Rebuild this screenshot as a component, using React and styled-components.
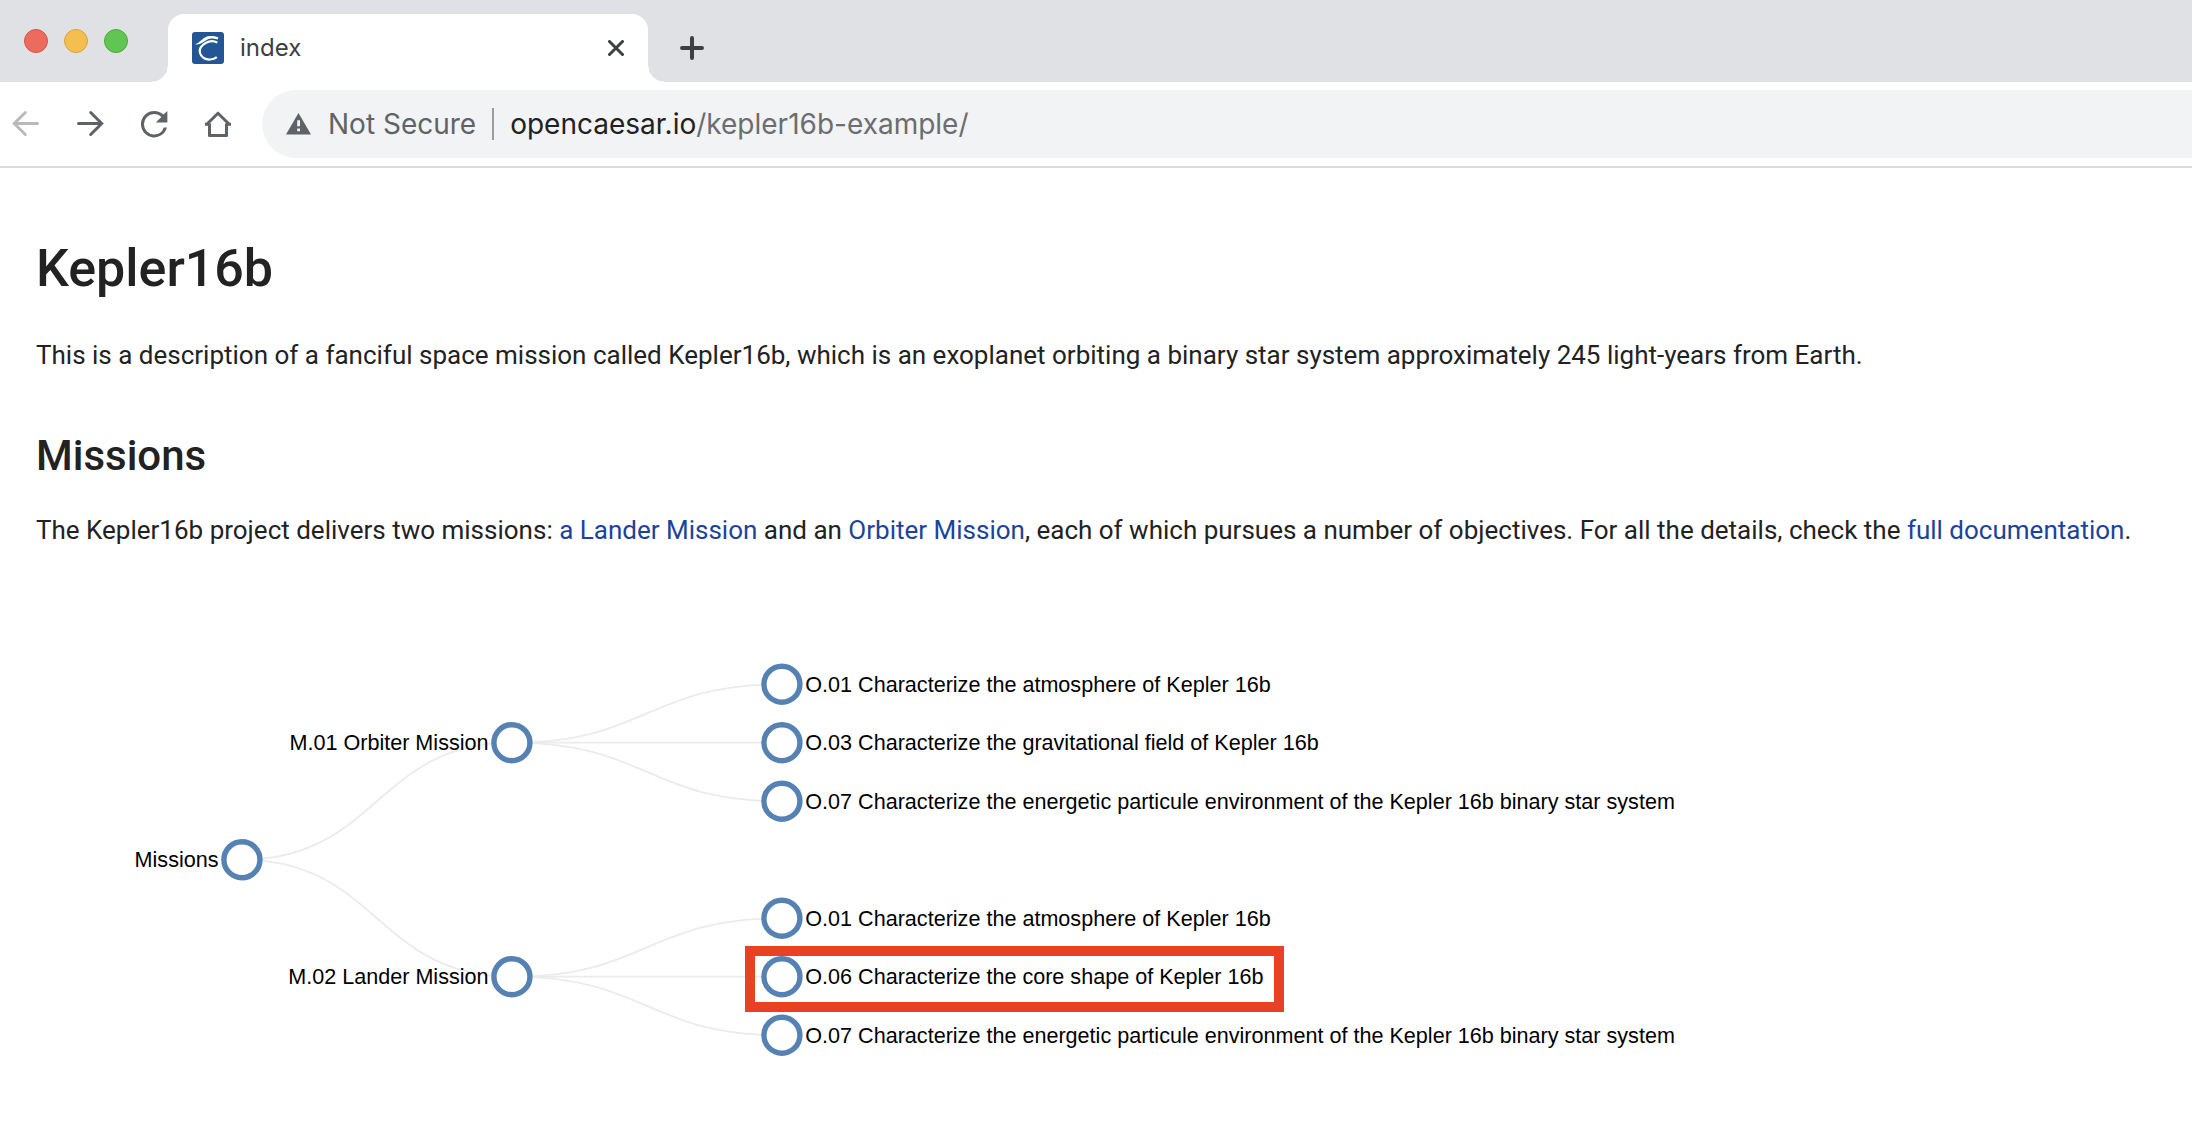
import React from 'react';
import styled, { createGlobalStyle } from 'styled-components';

const GlobalStyle = createGlobalStyle`
  *, *::before, *::after { box-sizing: border-box; }
  body {
    margin: 0;
    background: #fff;
    color: #222;
    font-family: Roboto, "Liberation Sans", sans-serif;
  }
`;

/* ---------- browser chrome ---------- */

const Chrome = styled.header`
  font-family: Inter, Roboto, sans-serif;
  border-bottom: 2px solid #dadbdd;
`;

const TabStrip = styled.div`
  display: flex;
  align-items: flex-end;
  height: 82px;
  background: #dfe1e5;
`;

const WindowControls = styled.div`
  display: flex;
  align-items: center;
  align-self: stretch;
  gap: 16px;
  padding: 0 40px 0 24px;
`;

const WindowButton = styled.button`
  width: 24px;
  height: 24px;
  padding: 0;
  border: 1px solid ${(p) => p.$edge};
  border-radius: 50%;
  background: ${(p) => p.$fill};
`;

const Tab = styled.div`
  position: relative;
  display: flex;
  align-items: center;
  gap: 16px;
  width: 480px;
  height: 68px;
  padding: 0 24px;
  border-radius: 16px 16px 0 0;
  background: #fff;

  &::before,
  &::after {
    content: '';
    position: absolute;
    bottom: 0;
    width: 16px;
    height: 16px;
  }
  &::before {
    right: 100%;
    background: radial-gradient(circle at 0 0, transparent 15px, #fff 16px);
  }
  &::after {
    left: 100%;
    background: radial-gradient(circle at 100% 0, transparent 15px, #fff 16px);
  }
`;

const TabTitle = styled.span`
  flex: 1;
  color: #3c4043;
  font-size: 24px;
  line-height: 32px;
`;

const PlainButton = styled.button`
  display: flex;
  align-items: center;
  justify-content: center;
  padding: 0;
  border: 0;
  background: none;
  color: #3c4043;
`;

const NewTabButton = styled(PlainButton)`
  height: 68px;
  margin-left: 32px;
`;

const Toolbar = styled.div`
  display: flex;
  align-items: center;
  padding: 8px 0 8px 10px;
`;

const NavButtons = styled.nav`
  display: flex;
  gap: 32px;
  margin-right: 28px;
`;

const NavButton = styled(PlainButton)`
  width: 32px;
  height: 32px;
  color: ${(p) => (p.disabled ? '#bababc' : '#5f6368')};
`;

const AddressBar = styled.div`
  flex: 1;
  display: flex;
  align-items: center;
  gap: 16px;
  height: 68px;
  padding-left: 24px;
  border-radius: 34px 0 0 34px;
  background: #f1f3f4;
  color: #5f6368;
  font-size: 28px;
  line-height: 36px;
  white-space: nowrap;
`;

const Divider = styled.span`
  width: 2px;
  height: 32px;
  background: #9b9da0;
`;

const Address = styled.div`
  flex: 1;
  color: #6b6d70;
  outline: none;
`;

const Host = styled.span`
  color: #202124;
`;

/* ---------- page ---------- */

const Page = styled.main`
  padding: 69px 0 32px 36px;
`;

const Title = styled.h1`
  margin: 0 0 36px;
  font-size: 52px;
  line-height: 64px;
  font-weight: 500;
`;

const Heading = styled.h2`
  margin: 57px 0 30px;
  font-size: 42px;
  line-height: 52px;
  font-weight: 500;
`;

const Paragraph = styled.p`
  margin: 0;
  font-size: 26px;
  line-height: 36px;
`;

const Link = styled.a`
  color: #1c439b;
  text-decoration: none;
`;

const Figure = styled.figure`
  position: relative;
  margin: 48px 0 0;
`;

const TreeSvg = styled.svg`
  display: block;
  width: 1800px;
  height: 468px;
  font: 12px "Liberation Sans", Arial, sans-serif;

  path {
    fill: none;
    stroke: #ebebeb;
    stroke-width: 1;
  }
  circle {
    fill: #fff;
    stroke: #5682b3;
    stroke-width: 3;
  }
  text {
    fill: #000;
  }
`;

const Highlight = styled.span`
  position: absolute;
  left: 709px;
  top: 350px;
  width: 539px;
  height: 66px;
  border: 10px solid #ea4025;
`;

/* ---------- tree data ---------- */

const DEPTH_X = [0, 150, 300];
const ROW = 32.5;

const tree = {
  name: 'Missions',
  row: 3,
  children: [
    {
      name: 'M.01 Orbiter Mission',
      row: 1,
      children: [
        { name: 'O.01 Characterize the atmosphere of Kepler 16b', row: 0 },
        { name: 'O.03 Characterize the gravitational field of Kepler 16b', row: 1 },
        {
          name: 'O.07 Characterize the energetic particule environment of the Kepler 16b binary star system',
          row: 2,
        },
      ],
    },
    {
      name: 'M.02 Lander Mission',
      row: 5,
      children: [
        { name: 'O.01 Characterize the atmosphere of Kepler 16b', row: 4 },
        { name: 'O.06 Characterize the core shape of Kepler 16b', row: 5 },
        {
          name: 'O.07 Characterize the energetic particule environment of the Kepler 16b binary star system',
          row: 6,
        },
      ],
    },
  ],
};

function flatten(node, depth = 0, parent = null) {
  const placed = { name: node.name, x: DEPTH_X[depth], y: node.row * ROW, parent, leaf: !node.children };
  return [placed, ...(node.children || []).flatMap((child) => flatten(child, depth + 1, placed))];
}

const nodes = flatten(tree);

function MissionTree() {
  return (
    <TreeSvg viewBox="-114.4 -49 1000 260" role="img" aria-label="Missions and their objectives">
      {nodes
        .filter((n) => n.parent)
        .map((n) => {
          const mid = (n.x + n.parent.x) / 2;
          return (
            <path
              key={`${n.x}-${n.y}`}
              d={`M${n.parent.x} ${n.parent.y}C${mid} ${n.parent.y} ${mid} ${n.y} ${n.x} ${n.y}`}
            />
          );
        })}
      {nodes.map((n) => (
        <g key={`${n.x}-${n.y}`} transform={`translate(${n.x} ${n.y})`}>
          <circle r="10" />
          <text x={n.leaf ? 13 : -13} dy=".35em" textAnchor={n.leaf ? 'start' : 'end'}>
            {n.name}
          </text>
        </g>
      ))}
    </TreeSvg>
  );
}

/* ---------- icons ---------- */

const Favicon = () => (
  <svg width="32" height="32" viewBox="0 0 32 32" aria-hidden="true">
    <rect width="32" height="32" rx="3" fill="#245695" />
    <path
      d="M25.4 10.6C22 8.8 17.5 8.8 13.6 11C9.4 13.4 7.2 17 7.9 20.6C8.9 25.4 13.6 27.9 18.3 27.5C21 27.3 23.2 26.5 24.8 25.2"
      fill="none"
      stroke="#fff"
      strokeWidth="2.2"
    />
    <path d="M3 12.3C8.5 11 11 4.3 18 4.1C21 4 23.8 4.6 26.4 5.2L25.6 7.4C22 6.4 18.5 6 15.5 7.4C12 9 8.5 13.2 3 12.3Z" fill="#fff" />
  </svg>
);

const BackArrow = () => (
  <svg width="32" height="32" viewBox="0 0 32 32" fill="none" stroke="currentColor" strokeWidth="3" strokeLinecap="round">
    <path d="M27.5 15.5H5M15.3 4.5L4.3 15.5L15.3 26.5" />
  </svg>
);

const ForwardArrow = () => (
  <svg width="32" height="32" viewBox="0 0 32 32" fill="none" stroke="currentColor" strokeWidth="3" strokeLinecap="round">
    <path d="M4.5 15.5H27M16.7 4.5L27.7 15.5L16.7 26.5" />
  </svg>
);

const ReloadIcon = () => (
  <svg width="32" height="32" viewBox="2.2 2.2 19.4 19.4" fill="currentColor">
    <path d="M17.55 6.2A7.96 7.96 0 0 0 12 4a8 8 0 1 0 7.73 10h-1.9A6.2 6.2 0 0 1 12 18.2a6.2 6.2 0 1 1 0-12.4c1.7 0 3.24.7 4.36 1.84L13 11h7V4l-2.45 2.2z" />
  </svg>
);

const HomeIcon = () => (
  <svg width="32" height="32" viewBox="0 0 32 32" fill="none" stroke="currentColor" strokeWidth="3">
    <path d="M4 17L16 5.2L28 17M3 16.3H7.5V27.5H24.5V16.3H29" strokeLinejoin="round" />
  </svg>
);

const WarningIcon = () => (
  <svg width="26" height="22" viewBox="0 0 26 22" role="img" aria-label="Warning">
    <path d="M12.5 0L25 21.5H0Z" fill="#5f6368" />
    <path d="M11.2 7.2h2.8v6h-2.8zM11.2 15.5h2.8v2.8h-2.8z" fill="#f1f3f4" />
  </svg>
);

const CloseIcon = () => (
  <svg width="16" height="16" viewBox="0 0 16 16" fill="none" stroke="currentColor" strokeWidth="3" strokeLinecap="round">
    <path d="M1.5 1.5L14.5 14.5M14.5 1.5L1.5 14.5" />
  </svg>
);

const PlusIcon = () => (
  <svg width="24" height="24" viewBox="0 0 24 24" fill="none" stroke="currentColor" strokeWidth="4" strokeLinecap="round">
    <path d="M2 12H22M12 2V22" />
  </svg>
);

export default function App() {
  return (
    <>
      <GlobalStyle />
      <Chrome>
        <TabStrip>
          <WindowControls>
            <WindowButton aria-label="Close window" $fill="#ed6a5e" $edge="#d55448" />
            <WindowButton aria-label="Minimize window" $fill="#f5bf4f" $edge="#d9a23c" />
            <WindowButton aria-label="Zoom window" $fill="#61c554" $edge="#4fa73c" />
          </WindowControls>
          <Tab>
            <Favicon />
            <TabTitle>index</TabTitle>
            <PlainButton aria-label="Close tab">
              <CloseIcon />
            </PlainButton>
          </Tab>
          <NewTabButton aria-label="New tab">
            <PlusIcon />
          </NewTabButton>
        </TabStrip>
        <Toolbar>
          <NavButtons aria-label="Browser navigation">
            <NavButton aria-label="Back" disabled>
              <BackArrow />
            </NavButton>
            <NavButton aria-label="Forward">
              <ForwardArrow />
            </NavButton>
            <NavButton aria-label="Reload">
              <ReloadIcon />
            </NavButton>
            <NavButton aria-label="Home">
              <HomeIcon />
            </NavButton>
          </NavButtons>
          <AddressBar>
            <WarningIcon />
            <span>Not Secure</span>
            <Divider />
            <Address role="textbox" aria-label="Address" contentEditable suppressContentEditableWarning spellCheck={false}>
              <Host>opencaesar.io</Host>/kepler16b-example/
            </Address>
          </AddressBar>
        </Toolbar>
      </Chrome>
      <Page>
        <Title>Kepler16b</Title>
        <Paragraph>
          This is a description of a fanciful space mission called Kepler16b, which is an exoplanet orbiting a binary
          star system approximately 245 light-years from Earth.
        </Paragraph>
        <Heading>Missions</Heading>
        <Paragraph>
          The Kepler16b project delivers two missions: <Link href="#lander">a Lander Mission</Link> and an{' '}
          <Link href="#orbiter">Orbiter Mission</Link>, each of which pursues a number of objectives. For all the
          details, check the <Link href="#documentation">full documentation</Link>.
        </Paragraph>
        <Figure>
          <MissionTree />
          <Highlight />
        </Figure>
      </Page>
    </>
  );
}
